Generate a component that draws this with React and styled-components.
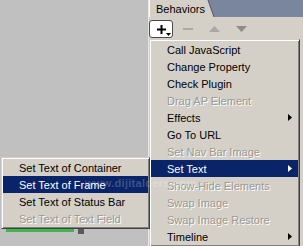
import React from "react";
import styled, { createGlobalStyle } from "styled-components";

const GlobalStyle = createGlobalStyle`
  html, body {
    margin: 0;
    padding: 0;
    background: #c0c0c0;
  }
  body {
    font-family: "Liberation Sans", Arial, sans-serif;
    font-size: 11px;
  }
`;

const Screen = styled.div`
  position: relative;
  display: flex;
  width: 303px;
  height: 246px;
  overflow: hidden;
  background: #c0c0c0;
`;

const Canvas = styled.div`
  width: 148px;
  flex-shrink: 0;
  display: flex;
  align-items: flex-start;
  gap: 4px;
  padding: 229px 0 0 6px;
  box-sizing: border-box;
`;

const GreenBar = styled.div`
  width: 68px;
  height: 3px;
  background: #3fb54e;
`;

const DarkNub = styled.div`
  width: 6px;
  height: 5px;
  background: #5a5a5a;
`;

const Panel = styled.div`
  position: relative;
  flex: 1;
  display: flex;
  flex-direction: column;
  background: #d4d0c8;
  border-left: 1px solid #e8e6e1;
`;

const TabStrip = styled.div`
  height: 17px;
  display: flex;
  align-items: stretch;
  background: #7a859e;
`;

const Tab = styled.div`
  display: flex;
  align-items: center;
  padding: 0 0 0 6px;
  width: 51px;
  background: #d4d0c8;
  color: #000;
  border-left: 1px solid #fff;
  box-sizing: content-box;
`;

const TabEdge = styled.svg`
  width: 7px;
  height: 17px;
  display: block;
`;

const Toolbar = styled.div`
  display: flex;
  align-items: center;
  height: 18px;
  margin-top: 3px;
`;

const AddButton = styled.div`
  position: relative;
  width: 22px;
  height: 16px;
  display: flex;
  align-items: center;
  justify-content: center;
  background: #fff;
  border: 1px solid #4a4a4a;
  border-radius: 3px;
`;

const Caret = styled.svg`
  position: absolute;
  right: 1px;
  bottom: 1px;
  width: 5px;
  height: 3px;
`;

const ToolSlot = styled.div`
  width: 27px;
  height: 18px;
  display: flex;
  align-items: center;
  justify-content: center;
  margin-left: ${({ $first }) => ($first ? "1px" : "0")};
`;

const Menu = styled.div`
  position: absolute;
  top: 39px;
  left: 0;
  width: 151px;
  padding: 1px;
  box-sizing: border-box;
  background: #d4d0c8;
  border: 1px solid;
  border-color: #d4d0c8 #404040 #404040 #d4d0c8;
  box-shadow: inset 1px 1px #fff, inset -1px -1px #808080;
  z-index: 2;
`;

const SubMenu = styled(Menu)`
  top: 157px;
  left: 1px;
  width: 149px;
  z-index: 3;
`;

const MenuItem = styled.div`
  display: flex;
  align-items: center;
  height: 17px;
  padding: 0 6px 0 16px;
  white-space: nowrap;
  color: ${({ $active, $disabled }) =>
    $active ? "#fff" : $disabled ? "#9a9895" : "#000"};
  background: ${({ $active }) => ($active ? "#0a246a" : "transparent")};
  text-shadow: ${({ $active, $disabled }) =>
    $disabled && !$active ? "1px 1px 0 #fff" : "none"};
`;

const Label = styled.span`
  flex: 1;
`;

const Arrow = styled.svg`
  width: 4px;
  height: 7px;
  display: block;
`;

const Watermark = styled.div`
  position: absolute;
  left: 85px;
  top: 177px;
  font-weight: bold;
  font-size: 11px;
  color: rgba(255, 255, 255, 0.22);
  letter-spacing: 0.3px;
  z-index: 4;
  pointer-events: none;
`;

const behaviors = [
  { label: "Call JavaScript" },
  { label: "Change Property" },
  { label: "Check Plugin" },
  { label: "Drag AP Element", disabled: true },
  { label: "Effects", sub: true },
  { label: "Go To URL" },
  { label: "Set Nav Bar Image", disabled: true },
  { label: "Set Text", sub: true, active: true },
  { label: "Show-Hide Elements", disabled: true },
  { label: "Swap Image", disabled: true },
  { label: "Swap Image Restore", disabled: true },
  { label: "Timeline", sub: true },
];

const setTextItems = [
  { label: "Set Text of Container" },
  { label: "Set Text of Frame", active: true },
  { label: "Set Text of Status Bar" },
  { label: "Set Text of Text Field", disabled: true },
];

const Item = ({ item }) => (
  <MenuItem $active={item.active} $disabled={item.disabled}>
    <Label>{item.label}</Label>
    {item.sub && (
      <Arrow viewBox="0 0 4 7">
        <polygon points="0,0 4,3.5 0,7" fill="currentColor" />
      </Arrow>
    )}
  </MenuItem>
);

const App = () => (
  <>
    <GlobalStyle />
    <Screen>
      <Canvas>
        <GreenBar />
        <DarkNub />
      </Canvas>
      <Panel>
        <TabStrip>
          <Tab>Behaviors</Tab>
          <TabEdge viewBox="0 0 7 17">
            <polygon points="0,0 1,0 7,17 0,17" fill="#d4d0c8" />
            <line x1="1" y1="0" x2="7" y2="17" stroke="#4f5566" strokeWidth="1" />
          </TabEdge>
        </TabStrip>
        <Toolbar>
          <AddButton>
            <svg width="9" height="9" viewBox="0 0 9 9">
              <rect x="3.5" y="0" width="2" height="9" fill="#000" />
              <rect x="0" y="3.5" width="9" height="2" fill="#000" />
            </svg>
            <Caret viewBox="0 0 5 3">
              <polygon points="0,0 5,0 2.5,3" fill="#000" />
            </Caret>
          </AddButton>
          <ToolSlot $first>
            <svg width="10" height="2" viewBox="0 0 10 2">
              <rect width="10" height="2" fill="#aaa8a4" />
            </svg>
          </ToolSlot>
          <ToolSlot>
            <svg width="11" height="6" viewBox="0 0 11 6">
              <polygon points="5.5,0 11,6 0,6" fill="#aaa8a4" />
            </svg>
          </ToolSlot>
          <ToolSlot>
            <svg width="11" height="6" viewBox="0 0 11 6">
              <polygon points="0,0 11,0 5.5,6" fill="#8e8c88" />
            </svg>
          </ToolSlot>
        </Toolbar>
        <Menu>
          {behaviors.map((item) => (
            <Item key={item.label} item={item} />
          ))}
        </Menu>
      </Panel>
      <SubMenu>
        {setTextItems.map((item) => (
          <Item key={item.label} item={item} />
        ))}
      </SubMenu>
      <Watermark>www.dijitalders.com</Watermark>
    </Screen>
  </>
);

export default App;
